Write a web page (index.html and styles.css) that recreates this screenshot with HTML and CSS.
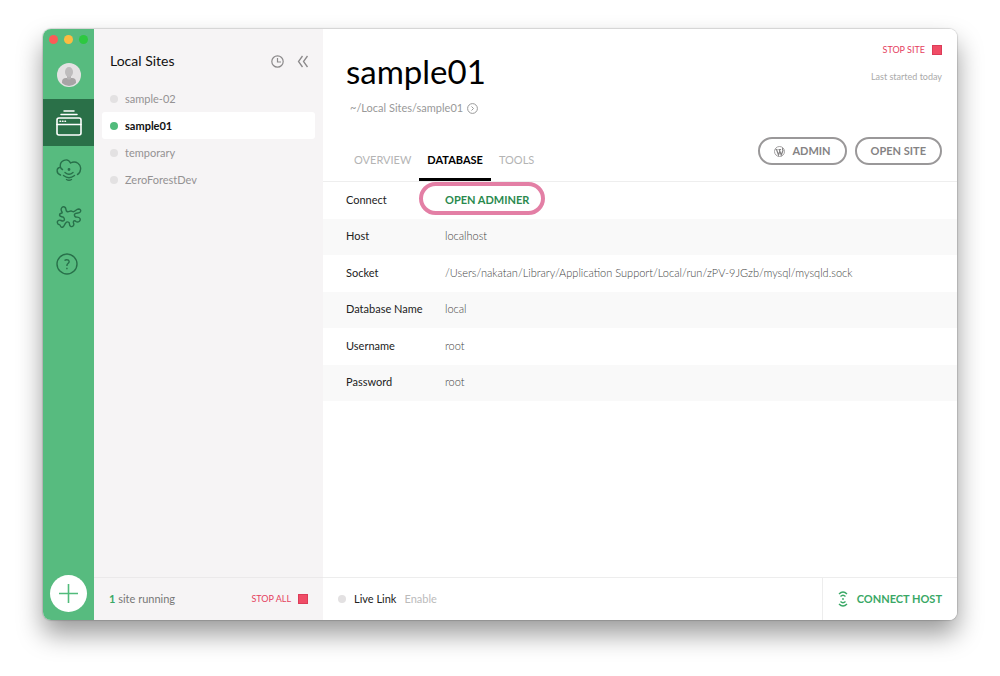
FILE: index.html
```html
<!DOCTYPE html>
<html lang="en">
<head>
    <meta charset="UTF-8">
    <meta name="viewport" content="width=device-width, initial-scale=1">
    <title>Local Sites</title>
    <link rel="stylesheet" href="styles.css">
</head>
<body>
    <div class="window">
        <nav class="rail">
            <div class="lights">
                <span class="light red"></span>
                <span class="light yellow"></span>
                <span class="light green"></span>
            </div>
            <a class="rail-item avatar" href="#" aria-label="Account">
                <svg width="24" height="24" viewBox="0 0 24 24">
                    <circle cx="12" cy="12" r="12" fill="#e4e2e3"/>
                    <path d="M5 20v-1q0-4 4-4h6q4 0 4 4v1q-3 3-7 3t-7-3z" fill="#a7a4a5"/>
                    <path d="M10 12h4v4q-2 1-4 0z" fill="#b5b3b4"/>
                    <ellipse cx="12" cy="9" rx="4" ry="5" fill="#bebcbd"/>
                </svg>
            </a>
            <a class="rail-item active" href="#" aria-label="Local sites">
                <svg width="26" height="26" viewBox="0 0 26 26" fill="none" stroke="#fff" stroke-linecap="round">
                    <path d="M8 1h10M5 4.500h16" stroke-width="1.500"/>
                    <rect x="1" y="8" width="24" height="17" rx="2" stroke-width="1.600"/>
                    <path d="M1 14.500h24" stroke-width="1.500"/>
                    <path d="M4 11.300h.5M6.500 11.300h.5M9 11.300h.5" stroke-width="1.500"/>
                </svg>
            </a>
            <a class="rail-item" href="#" aria-label="Cloud backups">
                <svg width="26" height="24" viewBox="0 0 26 24" fill="none" stroke="#28704a" stroke-width="1.400" stroke-linecap="round">
                    <path d="M4.500 17C0 15.500 0 10 4.500 9.300C3 2 12-.5 14.500 5C20 2 25.500 6.500 24.500 11.500Q24 15.500 21.500 16.500M4.500 9.300Q5 11 6.500 11.500"/>
                    <path d="M9 14.500q4 3.500 8 0M7.500 17.500q5.500 4.500 11 0M10.500 21.500q2.500 1.500 5 0"/>
                    <circle cx="13" cy="11.500" r=".7" fill="#28704a"/>
                </svg>
            </a>
            <a class="rail-item" href="#" aria-label="Add-ons">
                <svg width="26" height="24" viewBox="0 0 26 24" fill="none" stroke="#28704a" stroke-width="1.400" stroke-linejoin="round">
                    <path d="M6 7C4 4 6 1 8.500 2C11 3 9 5.500 11 6.500C13 7.500 14 5 16.500 6.500C18.500 8 20 4 22.500 4C26 4.500 25 8 22 8C18 8 18 10 19 11.500C20 13 22.500 11 24 13.500C25 16 22 18 20 16.500C18.500 15 17 16 17.500 18C18.500 20 17 22 15 21.500C12.500 20.500 14 18.500 13 17.500C11 16 10 17.500 9 19C7.500 22.500 5.500 23.500 4.500 21C4 19.500 3 20 2 19C0 16 3 14.500 5 15.500C8 17 9 15 8 13C7 11 4 12.500 3.500 10C3.500 7.500 7 9 6 7z"/>
                </svg>
            </a>
            <a class="rail-item help" href="#" aria-label="Help">
                <svg width="22" height="22" viewBox="0 0 22 22" fill="none" stroke="#28704a" stroke-width="1.400">
                    <circle cx="11" cy="11" r="10"/>
                    <path d="M8.500 7.500Q10.500 6 12.500 7.200Q14 9 12 10.500Q10.800 11.400 10.900 13"/>
                    <path d="M10.900 14.800v1.500"/>
                </svg>
            </a>
            <button class="add" type="button" aria-label="Add site">
                <svg width="19" height="19" viewBox="0 0 19 19" stroke="#51bb7b" stroke-width="1.600">
                    <path d="M9.500 0v19M0 9.500h19"/>
                </svg>
            </button>
        </nav>

        <aside class="sites">
            <header class="sites-head">
                <h2>Local Sites</h2>
                <button class="icon-btn" type="button" aria-label="Recent">
                    <svg width="13" height="13" viewBox="0 0 13 13" fill="none" stroke="#8c8a8b" stroke-width="1.200">
                        <circle cx="6.500" cy="6.500" r="5.700"/>
                        <path d="M6.500 3v4H10"/>
                    </svg>
                </button>
                <button class="icon-btn" type="button" aria-label="Collapse">
                    <svg width="12" height="13" viewBox="0 0 12 13" fill="none" stroke="#8c8a8b" stroke-width="1.300">
                        <path d="M5.500 1L1.500 6.500L5.500 12M10.500 1L6.500 6.500L10.500 12"/>
                    </svg>
                </button>
            </header>
            <ul class="site-list">
                <li><a href="#"><span class="dot"></span>sample-02</a></li>
                <li><a class="selected" href="#"><span class="dot on"></span>sample01</a></li>
                <li><a href="#"><span class="dot"></span>temporary</a></li>
                <li><a href="#"><span class="dot"></span>ZeroForestDev</a></li>
            </ul>
            <footer class="sites-foot">
                <span><b>1</b> site running</span>
                <button class="stop" type="button">STOP ALL <span class="square"></span></button>
            </footer>
        </aside>

        <main class="main">
            <header class="main-head">
                <div>
                    <h1>sample01</h1>
                    <a class="path" href="#">~/Local Sites/sample01
                        <svg width="11" height="11" viewBox="0 0 11 11" fill="none" stroke="#999">
                            <circle cx="5.500" cy="5.500" r="4.900"/>
                            <path d="M4.500 3.500l2 2l-2 2"/>
                        </svg>
                    </a>
                </div>
                <div class="status">
                    <button class="stop" type="button">STOP SITE <span class="square"></span></button>
                    <p>Last started today</p>
                </div>
            </header>

            <div class="bar">
                <nav class="tabs">
                    <a href="#">OVERVIEW</a>
                    <a class="current" href="#">DATABASE</a>
                    <a href="#">TOOLS</a>
                </nav>
                <div class="actions">
                    <button class="pill" type="button">
                        <svg width="11" height="11" viewBox="0 0 22 22" fill="none" stroke="#858384">
                            <circle cx="11" cy="11" r="10" stroke-width="1.500"/>
                            <path d="M3 7h4M9 7h5M5 7l4 11L11.500 11M10.500 7l4 11L18 9Q16 6 17.500 4" stroke-width="2.400"/>
                        </svg>
                        ADMIN
                    </button>
                    <button class="pill" type="button">OPEN SITE</button>
                </div>
            </div>

            <table class="details">
                <tr>
                    <th scope="row">Connect</th>
                    <td><a class="adminer" href="#">OPEN ADMINER</a></td>
                </tr>
                <tr>
                    <th scope="row">Host</th>
                    <td>localhost</td>
                </tr>
                <tr>
                    <th scope="row">Socket</th>
                    <td>/Users/nakatan/Library/Application Support/Local/run/zPV-9JGzb/mysql/mysqld.sock</td>
                </tr>
                <tr>
                    <th scope="row">Database Name</th>
                    <td>local</td>
                </tr>
                <tr>
                    <th scope="row">Username</th>
                    <td>root</td>
                </tr>
                <tr>
                    <th scope="row">Password</th>
                    <td>root</td>
                </tr>
            </table>

            <footer class="main-foot">
                <div class="live">
                    <span class="dot"></span>
                    <span>Live Link</span>
                    <button class="enable" type="button">Enable</button>
                </div>
                <button class="connect" type="button">
                    <svg width="10" height="16" viewBox="0 0 10 16" fill="none" stroke="#3aa866" stroke-width="1.400">
                        <path d="M1 3Q5-1 9 3M2.500 5.500Q5 3 7.500 5.500M2.500 10.500Q5 13 7.500 10.500M1 13Q5 17 9 13"/>
                        <circle cx="5" cy="8" r=".9" fill="#3aa866" stroke="none"/>
                    </svg>
                    CONNECT HOST
                </button>
            </footer>
        </main>
    </div>
</body>
</html>
```
FILE: styles.css
```css
* { box-sizing: border-box; }
body {
    margin: 0;
    min-height: 100vh;
    padding: 29px 43px 56px;
    display: flex;
    background: #fff;
    font-family: "Lato", "Open Sans", sans-serif;
    font-size: 11px;
    line-height: 16px;
    color: #222;
}
h1, h2, p, ul { margin: 0; padding: 0; font-weight: 400; }
a { color: inherit; text-decoration: none; }
button { font: inherit; color: inherit; background: none; border: 0; padding: 0; cursor: pointer; }
svg { display: block; flex: none; }

.window {
    flex: 1;
    display: grid;
    grid-template-columns: 51px 229px 1fr;
    border-radius: 8px;
    overflow: hidden;
    box-shadow: 0 0 1px 1px #0002, 0 14px 26px #0006;
}

/* green rail */
.rail { display: flex; flex-direction: column; align-items: center; background: #57bb7f; }
.lights { display: flex; gap: 6px; height: 22px; padding-top: 6px; }
.light { width: 9px; height: 9px; border-radius: 50%; }
.red { background: #fc5b57; }
.yellow { background: #fdbc40; }
.green { background: #2dc840; }
.rail-item { width: 100%; height: 47px; display: flex; align-items: center; justify-content: center; }
.avatar { height: 48px; }
.active { background: #2a7048; }
.help { padding-right: 4px; }
.add {
    width: 37px;
    height: 37px;
    margin: auto 0 8px;
    border-radius: 50%;
    background: #fff;
    display: flex;
    align-items: center;
    justify-content: center;
}

/* site list */
.sites { display: flex; flex-direction: column; background: #f6f4f5; }
.sites-head { display: flex; align-items: center; gap: 13px; height: 56px; padding: 8px 14px 0 16px; }
.sites-head h2 { flex: 1; font-size: 14px; color: #111; }
.site-list { list-style: none; padding: 0 8px; flex: 1; }
.site-list a { display: flex; align-items: center; gap: 7px; height: 27px; padding: 0 8px; border-radius: 3px; color: #949293; }
.site-list .selected { background: #fff; color: #111; font-weight: 700; }
.dot { width: 8px; height: 8px; border-radius: 50%; background: #e3e1e2; }
.on { background: #51bb7b; }
.sites-foot {
    display: flex;
    align-items: center;
    justify-content: space-between;
    height: 43px;
    padding: 0 15px;
    border-top: 1px solid #ebe9ea;
    color: #777;
}
.sites-foot b { color: #3aa866; }
.stop { display: flex; align-items: center; gap: 7px; font-size: 9px; color: #e5415f; }
.square { width: 10px; height: 10px; background: #f04c66; border: 1px solid #dc3c58; }

/* main pane */
.main { display: flex; flex-direction: column; background: #fff; min-width: 0; }
.main-head { display: flex; justify-content: space-between; height: 100px; padding: 13px 15px 0 23px; }
.main-head h1 { font-size: 33px; line-height: 58px; color: #000; }
.path { display: flex; align-items: center; gap: 4px; padding-left: 4px; color: #999; }
.status { display: flex; flex-direction: column; align-items: flex-end; gap: 11px; font-size: 9px; color: #aaa; }

.bar { display: flex; justify-content: space-between; height: 53px; padding-right: 15px; border-bottom: 1px solid #eee; }
.tabs { display: flex; padding-left: 23px; }
.tabs a { padding: 23px 8px 0; color: #b4b4b4; }
.tabs .current { color: #000; font-weight: 700; border-bottom: 3px solid #000; }
.actions { display: flex; gap: 8px; padding-top: 8px; }
.pill {
    display: flex;
    align-items: center;
    gap: 7px;
    height: 28px;
    padding: 0 14px;
    border: 2px solid #9a9899;
    border-radius: 14px;
    color: #858384;
    font-weight: 700;
}

.details { width: 100%; height: 219px; border-collapse: collapse; }
.details th, .details td { padding: 0 0 1px; text-align: left; font-weight: 400; }
.details th { width: 122px; padding-left: 23px; }
.details td { color: #444; font-weight: 300; }
.details tr:nth-child(even) { background: #f9f9f9; }
.details .adminer { position: relative; color: #2a8a4e; font-weight: 700; }
/* highlight ring round the link */
.adminer::after {
    content: "";
    position: absolute;
    inset: -11px -16px -9px -26px;
    border: 4px solid #e37fa5;
    border-radius: 17px;
}

.main-foot { display: flex; height: 43px; margin-top: auto; border-top: 1px solid #ededed; }
.live { flex: 1; display: flex; align-items: center; gap: 8px; padding-left: 15px; }
.enable { color: #bbb; }
.connect {
    display: flex;
    align-items: center;
    gap: 9px;
    padding: 0 15px;
    border-left: 1px solid #ededed;
    color: #3aa866;
    font-weight: 700;
}
```
